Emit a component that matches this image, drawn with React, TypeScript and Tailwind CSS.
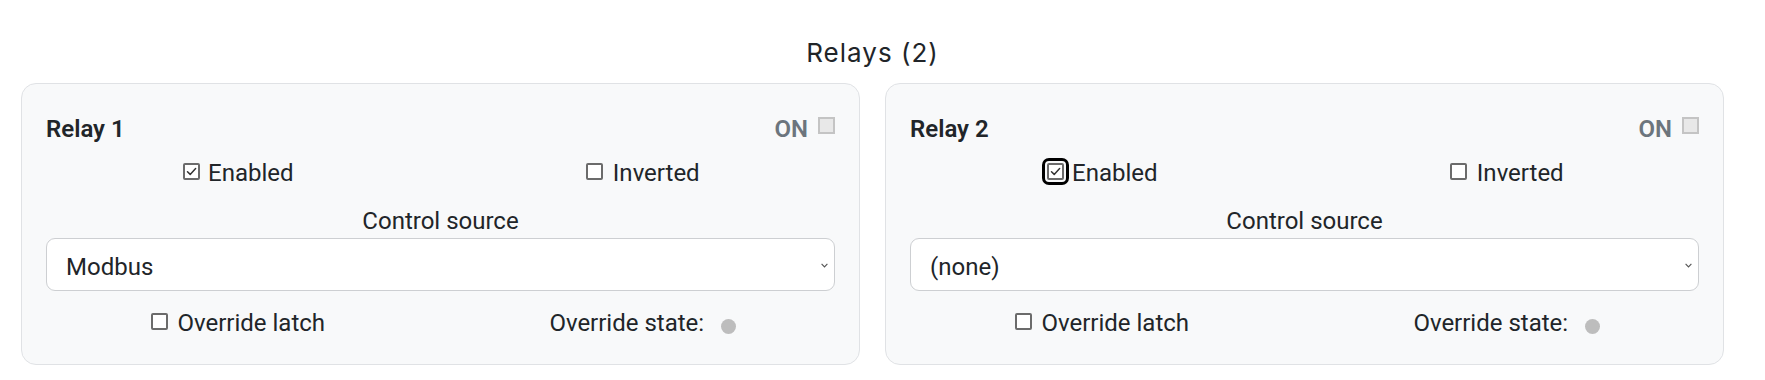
import React from "react";

type RelayProps = {
  name: string;
  source: string;
  focused?: boolean;
};

function CheckBox({ checked, focused }: { checked?: boolean; focused?: boolean }) {
  return (
    <span
      className={
        "inline-flex h-[17px] w-[17px] shrink-0 items-center justify-center rounded-[2px] border-2 border-[#6b6b6b] bg-white mb-[3px]" +
        (focused ? " outline-[3px] outline-solid outline-black outline-offset-[2px]" : "")
      }
    >
      {checked && (
        <svg width="13" height="13" viewBox="0 0 13 13" fill="none">
          <path d="M2.5 6.8 L5.2 9.4 L10.6 3.6" stroke="#333" strokeWidth="1.5" strokeLinecap="round" strokeLinejoin="round" />
        </svg>
      )}
    </span>
  );
}

function RelayCard({ name, source, focused }: RelayProps) {
  return (
    <div className="rounded-[15px] border border-[#e0e2e5] bg-[#f8f9fa] px-[24px] pt-[27px] pb-[23px] text-[24px] text-[#212529]">
      {/* header */}
      <div className="flex h-[36px] items-center justify-between leading-[36px]">
        <span className="font-semibold">{name}</span>
        <div className="flex items-center gap-[10px]">
          <span className="font-semibold text-[#6c757d]">ON</span>
          <span className="mb-[7px] h-[17px] w-[17px] border-2 border-[#c4c4c4] bg-[#e8e8e8]" />
        </div>
      </div>

      <div className="mt-[8px] -mx-[10px] grid grid-cols-2 leading-[36px]">
        <label className="flex items-center justify-center gap-[8px]">
          <CheckBox checked focused={focused} />
          <span>Enabled</span>
        </label>
        <label className="flex items-center justify-center gap-[10px]">
          <CheckBox />
          <span>Inverted</span>
        </label>
      </div>

      <div className="mt-[14px] text-center leading-[33px]">Control source</div>

      <div className="relative flex h-[53px] items-center rounded-[9px] border border-[#cdcfd2] bg-white pl-[19px] pt-[4px]">
        <span className="leading-none">{source}</span>
        <svg
          className="absolute right-[6px] top-[24px]"
          width="7"
          height="5"
          viewBox="0 0 7 5"
          fill="none"
        >
          <path d="M0.6 0.8 L3.5 3.9 L6.4 0.8" stroke="#555" strokeWidth="1.1" />
        </svg>
      </div>

      <div className="mt-[14px] -mx-[10px] grid grid-cols-2 leading-[36px]">
        <label className="flex items-center justify-center gap-[9px]">
          <CheckBox />
          <span>Override latch</span>
        </label>
        <div className="flex items-center justify-center gap-[17px]">
          <span>Override state:</span>
          <span className="mt-[7px] h-[15px] w-[15px] rounded-full bg-[#bdbdbd]" />
        </div>
      </div>
    </div>
  );
}

export default function App() {
  return (
    <div
      className="h-[380px] w-[1745px] bg-white pt-[37px]"
      style={{ fontFamily: "Roboto, 'Noto Sans', sans-serif" }}
    >
      <h4
        className="mb-[14px] text-center text-[26px] leading-[32px] tracking-[1px] text-[#212529]"
        style={{ fontFamily: "Inter, 'Noto Sans', sans-serif" }}
      >
        Relays (2)
      </h4>
      <div className="grid grid-cols-2 gap-[25px] px-[21px]">
        <RelayCard name="Relay 1" source="Modbus" />
        <RelayCard name="Relay 2" source="(none)" focused />
      </div>
    </div>
  );
}
